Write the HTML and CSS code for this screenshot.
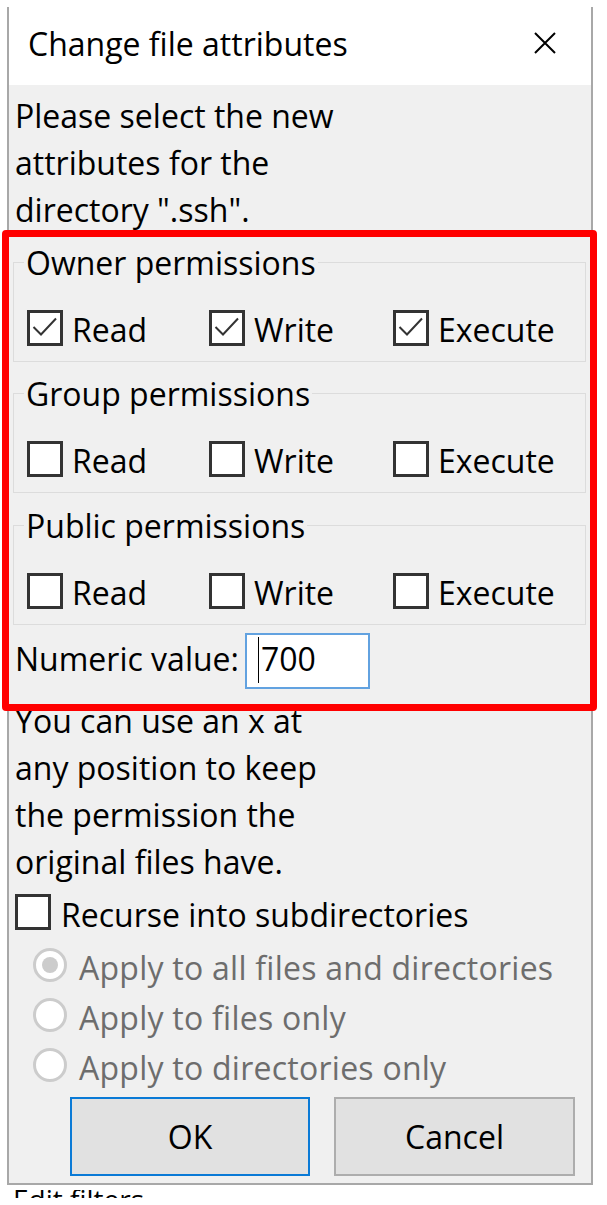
FILE: index.html
```html
<!DOCTYPE html>
<html lang="en">
<head>
<meta charset="utf-8">
<title>Change file attributes</title>
<link rel="stylesheet" href="styles.css">
</head>
<body>
<div class="dialog">
  <div class="titlebar">
    <span class="title">Change file attributes</span>
    <svg class="close" width="22" height="22" viewBox="0 0 22 22" aria-hidden="true">
      <path d="M1 1 L21 21 M21 1 L1 21" stroke="#000" stroke-width="2" fill="none"/>
    </svg>
  </div>
  <div class="content">
    <p class="text intro">Please select the new<br>attributes for the<br>directory ".ssh".</p>

    <div class="group">
      <div class="group-title">Owner permissions</div>
      <div class="perm-row">
        <label class="check"><span class="box"><svg viewBox="0 0 30 30"><path d="M3.5 14 L11 21.5 L26 5.5" /></svg></span><span class="lbl">Read</span></label>
        <label class="check"><span class="box"><svg viewBox="0 0 30 30"><path d="M3.5 14 L11 21.5 L26 5.5" /></svg></span><span class="lbl">Write</span></label>
        <label class="check"><span class="box"><svg viewBox="0 0 30 30"><path d="M3.5 14 L11 21.5 L26 5.5" /></svg></span><span class="lbl">Execute</span></label>
      </div>
    </div>

    <div class="group">
      <div class="group-title">Group permissions</div>
      <div class="perm-row">
        <label class="check"><span class="box"></span><span class="lbl">Read</span></label>
        <label class="check"><span class="box"></span><span class="lbl">Write</span></label>
        <label class="check"><span class="box"></span><span class="lbl">Execute</span></label>
      </div>
    </div>

    <div class="group group-last">
      <div class="group-title">Public permissions</div>
      <div class="perm-row">
        <label class="check"><span class="box"></span><span class="lbl">Read</span></label>
        <label class="check"><span class="box"></span><span class="lbl">Write</span></label>
        <label class="check"><span class="box"></span><span class="lbl">Execute</span></label>
      </div>
    </div>

    <div class="numeric">
      <span class="num-label">Numeric value:</span>
      <div class="textbox"><span class="caret"></span><span class="num-value">700</span></div>
    </div>

    <p class="text hint">You can use an x at<br>any position to keep<br>the permission the<br>original files have.</p>

    <label class="check recurse"><span class="box"></span><span class="lbl">Recurse into subdirectories</span></label>

    <div class="radios">
      <div class="radio"><span class="circle checked"></span><span class="rlbl">Apply to all files and directories</span></div>
      <div class="radio"><span class="circle"></span><span class="rlbl">Apply to files only</span></div>
      <div class="radio"><span class="circle"></span><span class="rlbl">Apply to directories only</span></div>
    </div>

    <div class="buttons">
      <div class="btn btn-default">OK</div>
      <div class="btn">Cancel</div>
    </div>
  </div>
</div>
<div class="behind"><div class="behind-text">Edit filters</div></div>
<div class="highlight"></div>
</body>
</html>
```

FILE: styles.css
```css
* { box-sizing: border-box; }

html, body {
  margin: 0;
  padding: 0;
  background: #ffffff;
}

body {
  font-family: "Open Sans", "Noto Sans", sans-serif;
  font-size: 32px;
  color: #000;
  width: 607px;
  height: 1205px;
  overflow: hidden;
  position: relative;
}

.dialog {
  margin: 7px 0 0 7px;
  width: 586px;
  border-left: 2px solid #a8a8a8;
  border-right: 2px solid #a8a8a8;
  border-bottom: 2px solid #a8a8a8;
}

.titlebar {
  height: 78px;
  background: #ffffff;
  display: flex;
  align-items: flex-start;
  padding-top: 18px;
}

.title {
  margin-left: 19px;
  line-height: 38px;
}

.close {
  margin-left: auto;
  margin-right: 35px;
  margin-top: 7px;
}

.content {
  background: #f0f0f0;
  padding: 7px 5px 7px 4px;
}

.text {
  margin: 0 0 0 2px;
  line-height: 47px;
}

.group {
  border: 1px solid #dcdcdc;
  margin-top: 29px;
  padding-bottom: 15px;
}

.group + .group { margin-top: 31px; }
.group.group-last { margin-top: 32px; }

.group-title {
  width: fit-content;
  margin: -15px 0 0 10px;
  padding: 0 2px;
  line-height: 30px;
  background: #f0f0f0;
}

.perm-row {
  display: grid;
  grid-template-columns: 182px 184px 1fr;
  padding-left: 13px;
  margin-top: 32px;
}

.check {
  display: flex;
  align-items: flex-start;
  height: 36px;
}

.box {
  width: 36px;
  height: 36px;
  flex: none;
  border: 3px solid #333333;
  background: #ffffff;
}

.box svg {
  display: block;
  width: 30px;
  height: 30px;
}

.box path {
  fill: none;
  stroke: #333333;
  stroke-width: 2;
}

.lbl {
  margin-left: 9px;
  line-height: 36px;
  padding-top: 2px;
  white-space: nowrap;
}

.numeric {
  display: flex;
  align-items: flex-start;
  margin: 8px 0 0 2px;
}

.num-label {
  width: 230px;
  line-height: 52px;
}

.textbox {
  width: 125px;
  height: 56px;
  border: 2px solid #62a2e0;
  background: #ffffff;
  display: flex;
  align-items: flex-start;
  padding-left: 11px;
}

.caret {
  width: 1px;
  height: 46px;
  margin-top: 2px;
  background: #000;
  margin-right: 2px;
}

.num-value {
  line-height: 48px;
}

.hint {
  margin-top: 8px;
}

.recurse {
  margin: 9px 0 0 2px;
}

.recurse .lbl {
  margin-left: 10px;
  padding-top: 3px;
}

.radios {
  margin: 10px 0 0 20px;
}

.radio {
  height: 50px;
  display: flex;
  align-items: flex-start;
  color: #6d6d6d;
}

.circle {
  width: 34px;
  height: 34px;
  flex: none;
  margin-top: 8px;
  border: 3px solid #cccccc;
  border-radius: 50%;
  background: #ffffff;
  display: flex;
  align-items: center;
  justify-content: center;
}

.circle.checked::after {
  content: "";
  width: 16px;
  height: 16px;
  border-radius: 50%;
  background: #cccccc;
}

.rlbl {
  margin-left: 12px;
  line-height: 50px;
  padding-top: 3px;
  letter-spacing: 0.25px;
  white-space: nowrap;
}

.buttons {
  display: flex;
  gap: 24px;
  margin: 7px 0 0 57px;
}

.btn {
  width: 241px;
  height: 79px;
  background: #e1e1e1;
  border: 2px solid #adadad;
  text-align: center;
  line-height: 75px;
}

.btn-default {
  width: 240px;
  border-color: #0a7ad6;
}

.behind {
  height: 8px;
  margin-top: 5px;
  overflow: hidden;
}

.behind-text {
  margin: -11px 0 0 13px;
  line-height: 40px;
  font-size: 28px;
}

.highlight {
  position: absolute;
  left: 2px;
  top: 230px;
  width: 595px;
  height: 481px;
  border: 7px solid #ff0000;
  border-radius: 4px;
  pointer-events: none;
}
```
